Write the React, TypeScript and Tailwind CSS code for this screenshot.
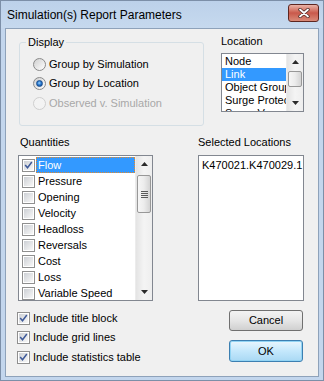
import React from "react";

function CheckMark() {
  return (
    <svg width="11" height="11" viewBox="0 0 11 11" className="block">
      <path d="M2 5.5 L4.3 8.2 L9 2" fill="none" stroke="#3f5a99" strokeWidth="1.8" strokeLinecap="square" />
    </svg>
  );
}

function CheckBox({ checked }: { checked?: boolean }) {
  return (
    <div className="w-[13px] h-[13px] border border-[#8f8f8f] bg-white p-[1px] shrink-0">
      <div className="w-full h-full bg-linear-to-br from-[#cdd0d5] to-[#f8f8f8] flex items-center justify-center overflow-visible">
        {checked && <CheckMark />}
      </div>
    </div>
  );
}

function Radio({ checked, disabled }: { checked?: boolean; disabled?: boolean }) {
  return (
    <div
      className={
        disabled
          ? "w-[13px] h-[13px] rounded-full border border-[#cfcfcf] bg-[#f3f3f3] shrink-0"
          : "w-[13px] h-[13px] rounded-full border border-[#8a8a8a] bg-linear-to-br from-[#cfcfcf] to-[#ffffff] flex items-center justify-center shrink-0"
      }
    >
      {checked && (
        <div className="w-[7px] h-[7px] rounded-full bg-[radial-gradient(circle_at_45%_40%,#9fd6ff_0%,#2a7ad0_45%,#0b3f86_100%)] border border-[#1b4f8f]" />
      )}
    </div>
  );
}

function ArrowUp() {
  return (
    <svg width="7" height="4" viewBox="0 0 7 4" className="block">
      <polygon points="3.5,0 7,4 0,4" fill="#2b2b2b" />
    </svg>
  );
}

function ArrowDown() {
  return (
    <svg width="7" height="4" viewBox="0 0 7 4" className="block">
      <polygon points="0,0 7,0 3.5,4" fill="#2b2b2b" />
    </svg>
  );
}

function ScrollBar({ thumbTop, thumbHeight, grip }: { thumbTop: number; thumbHeight: number; grip?: boolean }) {
  return (
    <div className="w-[17px] h-full flex flex-col shrink-0 bg-linear-to-r from-[#e4e4e4] via-[#f4f4f4] to-[#eeeeee] border-l border-[#ececec]">
      <div className="h-[16px] flex items-center justify-center shrink-0">
        <ArrowUp />
      </div>
      <div className="flex-1 flex flex-col items-center">
        <div
          className="w-[14px] rounded-[2px] border border-[#989898] bg-linear-to-r from-[#f6f6f6] via-[#ececec] to-[#d4d4d4] flex flex-col items-center justify-center gap-[1px]"
          style={{ marginTop: thumbTop, height: thumbHeight }}
        >
          {grip && (
            <>
              <div className="w-[7px] h-[1px] bg-[#5a5a5a]" />
              <div className="w-[7px] h-[1px] bg-[#5a5a5a]" />
              <div className="w-[7px] h-[1px] bg-[#5a5a5a]" />
              <div className="w-[7px] h-[1px] bg-[#5a5a5a]" />
            </>
          )}
        </div>
      </div>
      <div className="h-[16px] flex items-center justify-center shrink-0">
        <ArrowDown />
      </div>
    </div>
  );
}

const quantities = ["Flow", "Pressure", "Opening", "Velocity", "Headloss", "Reversals", "Cost", "Loss", "Variable Speed"];
const locations = ["Node", "Link", "Object Group", "Surge Protection", "Surge Vessel"];

export default function App() {
  return (
    <div className="w-[324px] h-[381px] bg-[#c3d6ed] border border-[#7c8fa8] flex flex-col font-['Liberation_Sans',Arial,sans-serif] text-[11px] text-black select-none overflow-hidden">
      {/* Title bar */}
      <div className="h-[27px] shrink-0 flex items-center pl-[6px] pr-[4px] bg-linear-to-b from-[#bcd1ea] to-[#c6d9ee]">
        <span className="text-[12px] leading-[14px] text-black mt-[1px]">Simulation(s) Report Parameters</span>
        <div className="ml-auto mb-[3px] w-[31px] h-[18px] rounded-[3px] border border-[#5e2620] bg-linear-to-b from-[#e9b3a7] via-[#c9594b] to-[#d98a78] flex items-center justify-center">
          <svg width="12" height="10" viewBox="0 0 12 10" className="block">
            <path d="M2 1.5 L10 8.5 M10 1.5 L2 8.5" stroke="#4a2a25" strokeWidth="3.4" strokeLinecap="round" />
            <path d="M2 1.5 L10 8.5 M10 1.5 L2 8.5" stroke="#ffffff" strokeWidth="1.8" strokeLinecap="round" />
          </svg>
        </div>
      </div>

      {/* Client area */}
      <div className="flex-1 mx-[4px] mb-[3px] bg-[#f0f0f0] border border-[#8ea2ba] flex flex-col">
        {/* Top section */}
        <div className="flex items-start pl-[13px]">
          <div className="relative mt-[13px] w-[185px] h-[84px] border border-[#d5dfe5] rounded-[3px]">
            <span className="absolute left-[6px] -top-[7px] px-[2px] bg-[#f0f0f0] leading-[13px]">Display</span>
            <div className="flex flex-col pl-[13px] pt-[15px]">
              <div className="flex items-center h-[13px]">
                <Radio />
                <span className="ml-[3px] leading-[13px]">Group by Simulation</span>
              </div>
              <div className="flex items-center h-[13px] mt-[6px]">
                <Radio checked />
                <span className="ml-[3px] leading-[13px]">Group by Location</span>
              </div>
              <div className="flex items-center h-[13px] mt-[7px]">
                <Radio disabled />
                <span className="ml-[3px] leading-[13px] text-[#a8a8a8]">Observed v. Simulation</span>
              </div>
            </div>
          </div>
          <div className="ml-[17px] flex flex-col">
            <div className="mt-[6px] h-[13px] leading-[13px]">Location</div>
            <div className="mt-[5px] w-[83px] h-[59px] border border-[#828790] bg-white flex overflow-hidden">
              <div className="flex-1 min-w-0 flex flex-col pt-[1px] overflow-hidden">
                {locations.map((l, i) => (
                  <div
                    key={l}
                    className={
                      i === 1
                        ? "h-[13px] leading-[13px] pl-[3px] bg-[#3399ff] text-white whitespace-nowrap shrink-0"
                        : "h-[13px] leading-[13px] pl-[3px] whitespace-nowrap shrink-0"
                    }
                  >
                    {l}
                  </div>
                ))}
              </div>
              <ScrollBar thumbTop={1} thumbHeight={16} />
            </div>
          </div>
        </div>

        {/* Middle section */}
        <div className="flex pl-[12px] mt-[10px]">
          <div className="flex flex-col w-[135px]">
            <div className="pl-[2px] h-[13px] leading-[13px]">Quantities</div>
            <div className="mt-[6px] h-[146px] border border-[#828790] bg-white flex overflow-hidden">
              <div className="flex-1 min-w-0 flex flex-col pt-[1px] overflow-hidden">
                {quantities.map((q, i) => (
                  <div key={q} className="h-[16px] flex items-center pl-[3px] shrink-0">
                    <CheckBox checked={i === 0} />
                    <span
                      className={
                        i === 0
                          ? "ml-[1px] flex-1 h-[16px] leading-[14px] pl-[1px] bg-[#3399ff] text-white border border-dotted border-[#e48a2c] whitespace-nowrap"
                          : "ml-[1px] flex-1 h-[16px] leading-[16px] pl-[2px] whitespace-nowrap"
                      }
                    >
                      {q}
                    </span>
                  </div>
                ))}
              </div>
              <ScrollBar thumbTop={3} thumbHeight={38} grip />
            </div>
          </div>
          <div className="ml-[45px] flex flex-col w-[106px]">
            <div className="h-[13px] leading-[13px]">Selected Locations</div>
            <div className="mt-[6px] h-[146px] border border-[#828790] bg-white pl-[3px] pt-[3px]">
              <div className="leading-[13px] whitespace-nowrap">K470021.K470029.1</div>
            </div>
          </div>
        </div>

        {/* Bottom section */}
        <div className="flex">
          <div className="ml-[11px] mt-[11px] flex flex-col">
            <div className="flex items-center h-[13px]">
              <CheckBox checked />
              <span className="ml-[3px] leading-[13px]">Include title block</span>
            </div>
            <div className="flex items-center h-[13px] mt-[6px]">
              <CheckBox checked />
              <span className="ml-[3px] leading-[13px]">Include grid lines</span>
            </div>
            <div className="flex items-center h-[13px] mt-[7px]">
              <CheckBox checked />
              <span className="ml-[3px] leading-[13px]">Include statistics table</span>
            </div>
          </div>
          <div className="ml-auto mr-[15px] mt-[9px] flex flex-col">
            <div className="w-[74px] h-[21px] rounded-[3px] border border-[#707070] bg-linear-to-b from-[#f3f3f3] via-[#e6e6e6] to-[#d0d0d0] flex items-center justify-center">
              Cancel
            </div>
            <div className="mt-[9px] w-[74px] h-[22px] rounded-[3px] border border-[#3c7fb1] bg-linear-to-b from-[#e9f6fd] via-[#c4e8fc] to-[#a9d9f4] shadow-[inset_0_0_0_1px_#92d4f4] flex items-center justify-center">
              OK
            </div>
          </div>
        </div>
      </div>
    </div>
  );
}
